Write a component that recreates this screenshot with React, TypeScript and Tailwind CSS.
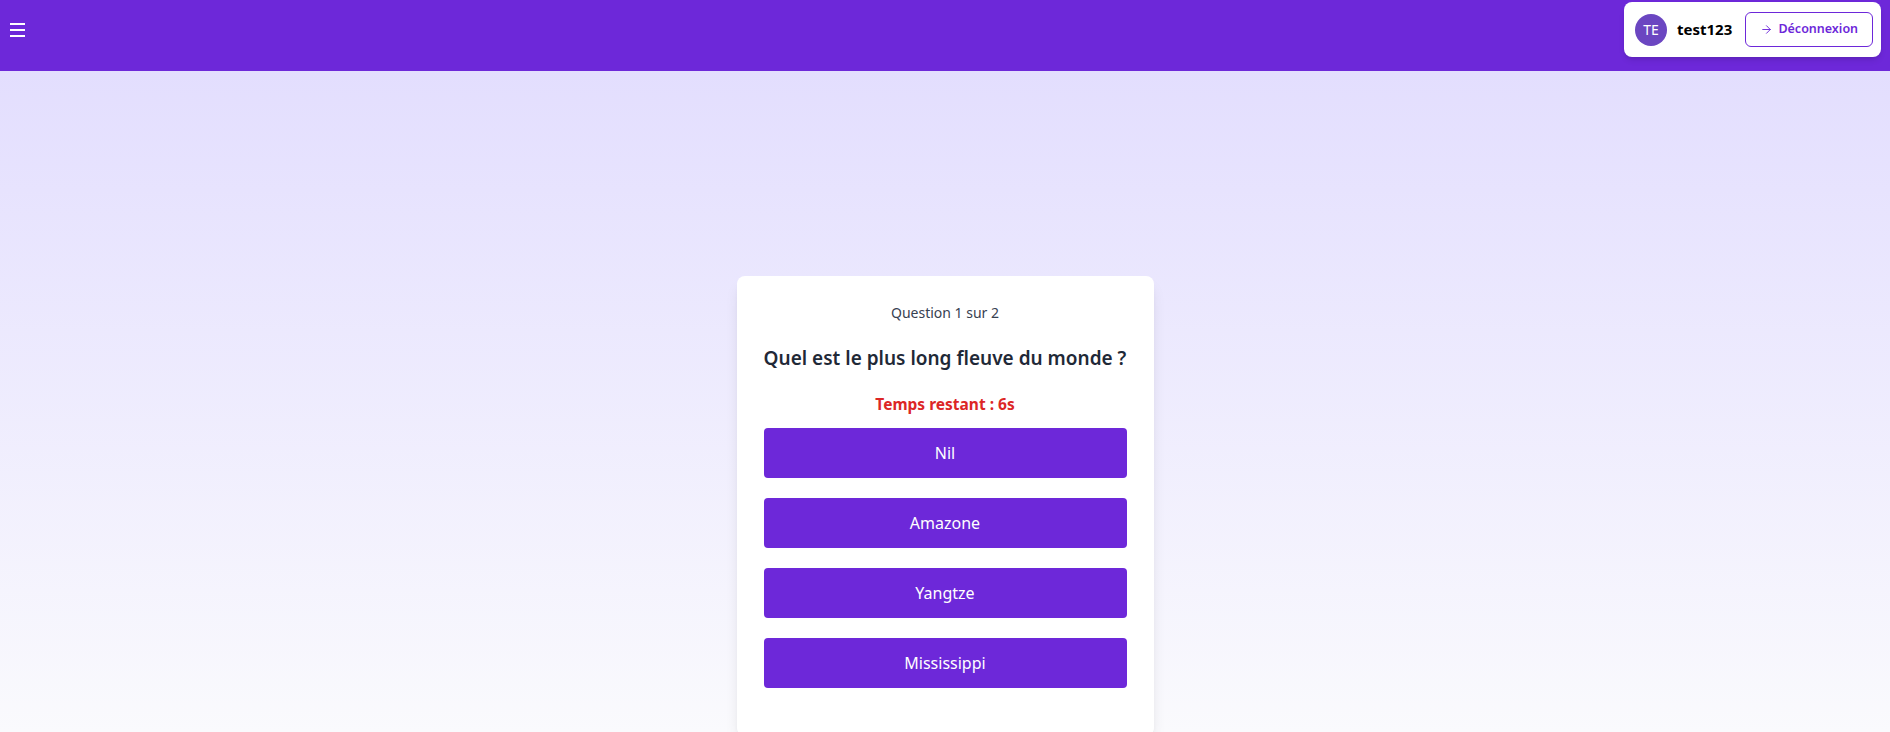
import { useState } from "react";
import { ArrowRight } from "lucide-react";

const options = ["Nil", "Amazone", "Yangtze", "Mississippi"];

function Header() {
	return (
		<header className="flex h-[71px] w-full items-start justify-between bg-[#6d28d9]">
			<button className="mt-[23px] ml-[10px] flex w-[15px] flex-col gap-[4px]">
				<span className="h-[2px] w-full bg-white" />
				<span className="h-[2px] w-full bg-white" />
				<span className="h-[2px] w-full bg-white" />
			</button>

			<div className="mt-[2px] mr-[9px] flex h-[55px] w-[257px] items-center rounded-lg bg-white pl-[11px] shadow-md">
				<div className="flex h-[32px] w-[32px] items-center justify-center rounded-full bg-[#6b46c1] text-[14px] text-white">
					TE
				</div>
				<span className="ml-[10px] text-[15px] font-bold text-black">
					test123
				</span>
				<button className="ml-[13px] flex h-[35px] w-[128px] items-center justify-center gap-[5px] rounded-md border border-[#6d28d9] text-[12.5px] font-semibold text-[#6d28d9]">
					<ArrowRight size={13} strokeWidth={1.75} />
					Déconnexion
				</button>
			</div>
		</header>
	);
}

export default function App() {
	const [selected, setSelected] = useState<string | null>(null);

	return (
		<div className="min-h-screen w-full font-['Noto_Sans',sans-serif]">
			<Header />
			<main className="flex h-[661px] justify-center overflow-hidden bg-gradient-to-b from-[#e3defe] to-[#fafafd] pt-[205px]">
				<div className="flex h-[460px] w-[417px] flex-col items-center rounded-lg bg-white px-[27px] pt-[27px] shadow-lg">
					<p className="text-[14px] leading-5 text-[#374151]">
						Question 1 sur 2
					</p>
					<h2 className="mt-[21px] text-[19px] leading-7 font-semibold text-[#1f2937]">
						Quel est le plus long fleuve du monde ?
					</h2>
					<p className="mt-[20px] text-[15.5px] leading-6 font-bold text-[#dc2626]">
						Temps restant : 6s
					</p>
					<div className="mt-[12px] flex w-full flex-col gap-[20px]">
						{options.map((option) => (
							<button
								key={option}
								onClick={() => setSelected(option)}
								className={`h-[50px] w-full rounded-[4px] text-[16px] text-white ${selected === option ? "bg-[#5b21b6]" : "bg-[#6d28d9]"}`}
							>
								{option}
							</button>
						))}
					</div>
				</div>
			</main>
		</div>
	);
}
